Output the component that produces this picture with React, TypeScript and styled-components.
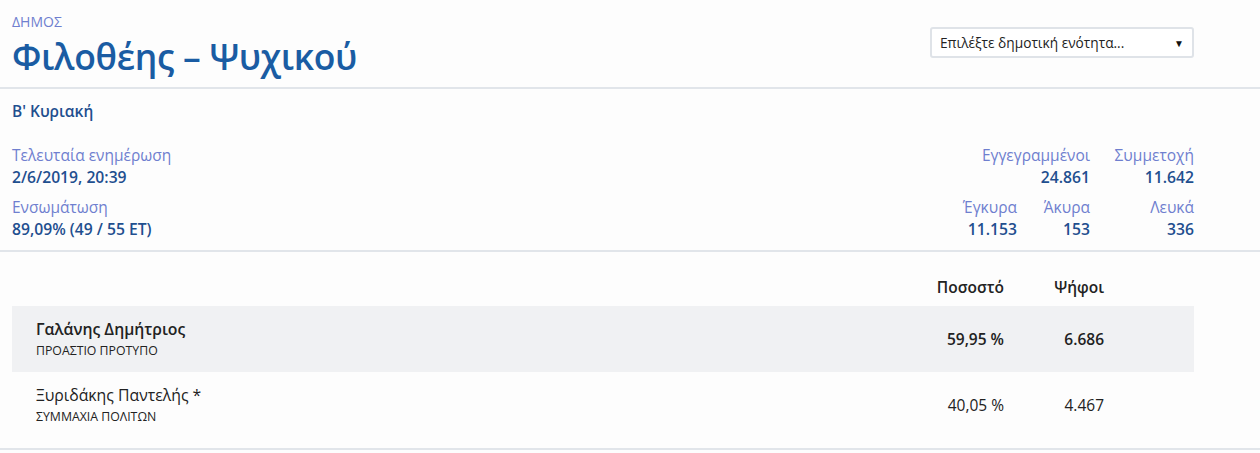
import * as React from 'react';
import styled, { createGlobalStyle } from 'styled-components';

const GlobalStyle = createGlobalStyle`
    body {
        margin: 0;
        background: #fdfdfd;
        font-family: "Open Sans", "Noto Sans", Arial, sans-serif;
    }
`;

const LABEL = '#6f7fcf';
const VALUE = '#1f4f8f';
const LINE = '#e1e5ea';

type Candidate = {
    name: string,
    party: string,
    percent: string,
    votes: string,
    winner?: boolean
}

const candidates: Candidate[] = [
    { name: 'Γαλάνης Δημήτριος', party: 'ΠΡΟΑΣΤΙΟ ΠΡΟΤΥΠΟ', percent: '59,95 %', votes: '6.686', winner: true },
    { name: 'Ξυριδάκης Παντελής *', party: 'ΣΥΜΜΑΧΙΑ ΠΟΛΙΤΩΝ', percent: '40,05 %', votes: '4.467' },
];

const Page = styled.div`
    width: 1260px;
`;

const Section = styled.div`
    padding: 0 66px 0 12px;
    border-bottom: 2px solid ${LINE};
`;

const Header = styled(Section)`
    display: flex;
    justify-content: space-between;
    align-items: flex-start;
    height: 89px;
    box-sizing: border-box;
`;

const Kind = styled.div`
    margin-top: 13px;
    font-size: 14px;
    line-height: 18px;
    color: ${LABEL};
`;

const Title = styled.h1`
    margin: 0;
    font-size: 35.5px;
    font-weight: 600;
    line-height: 50px;
    color: #1a5ca3;
    letter-spacing: -0.3px;
`;

const Select = styled.div`
    margin-top: 27px;
    width: 264px;
    height: 31px;
    box-sizing: border-box;
    border: 2px solid #dfe3e8;
    border-radius: 3px;
    background: #fff;
    display: flex;
    align-items: center;
    justify-content: space-between;
    padding: 0 8px 0 8px;
    font-size: 13.7px;
    color: #222;
`;

const Arrow = styled.span`
    font-size: 10px;
    color: #111;
`;

const Info = styled(Section)`
    padding-top: 12px;
    padding-bottom: 10px;
`;

const Round = styled.div`
    font-size: 15.5px;
    font-weight: 600;
    line-height: 20px;
    color: ${VALUE};
    margin-bottom: 23px;
`;

const Stats = styled.div`
    display: flex;
    justify-content: space-between;
`;

const StatList = styled.div`
    display: flex;
    flex-direction: column;
    gap: 8px;
`;

const Grid = styled.div`
    display: grid;
    grid-template-columns: 80px 73px 104px;
    row-gap: 8px;
    text-align: right;
`;

const Stat = styled.div<{ $span?: number }>`
    grid-column: ${({ $span }) => $span ? `span ${$span}` : 'auto'};
`;

const Label = styled.div`
    font-size: 15.5px;
    line-height: 22px;
    color: ${LABEL};
`;

const Value = styled.div`
    font-size: 15.7px;
    line-height: 22px;
    font-weight: 600;
    color: ${VALUE};
`;

const Results = styled(Section)`
    padding-top: 20px;
    padding-bottom: 10px;
`;

const Row = styled.div<{ $shade?: boolean, $head?: boolean }>`
    display: grid;
    grid-template-columns: 1fr 120px 100px 90px;
    align-items: center;
    height: ${({ $head }) => $head ? '30px' : '66px'};
    margin-bottom: ${({ $head }) => $head ? '4px' : '0'};
    background: ${({ $shade }) => $shade ? '#f0f1f3' : 'transparent'};
    color: #222;
`;

const Cell = styled.div<{ $bold?: boolean }>`
    text-align: right;
    font-size: 15.5px;
    font-weight: ${({ $bold }) => $bold ? 600 : 400};
`;

const Name = styled.div<{ $bold?: boolean }>`
    padding-left: 24px;
    font-size: 15.8px;
    line-height: 24px;
    font-weight: ${({ $bold }) => $bold ? 600 : 400};
`;

const Party = styled.div`
    padding-left: 24px;
    font-size: 12.3px;
    line-height: 20px;
    color: #222;
`;

const App: React.FC = () => {
    return (
        <Page>
            <GlobalStyle />
            <Header>
                <div>
                    <Kind>ΔΗΜΟΣ</Kind>
                    <Title>Φιλοθέης – Ψυχικού</Title>
                </div>
                <Select>
                    <span>Επιλέξτε δημοτική ενότητα...</span>
                    <Arrow>▼</Arrow>
                </Select>
            </Header>
            <Info>
                <Round>Β' Κυριακή</Round>
                <Stats>
                    <StatList>
                        <div>
                            <Label>Τελευταία ενημέρωση</Label>
                            <Value>2/6/2019, 20:39</Value>
                        </div>
                        <div>
                            <Label>Ενσωμάτωση</Label>
                            <Value>89,09% (49 / 55 ΕΤ)</Value>
                        </div>
                    </StatList>
                    <Grid>
                        <Stat $span={2}>
                            <Label>Εγγεγραμμένοι</Label>
                            <Value>24.861</Value>
                        </Stat>
                        <Stat>
                            <Label>Συμμετοχή</Label>
                            <Value>11.642</Value>
                        </Stat>
                        <Stat>
                            <Label>Έγκυρα</Label>
                            <Value>11.153</Value>
                        </Stat>
                        <Stat>
                            <Label>Άκυρα</Label>
                            <Value>153</Value>
                        </Stat>
                        <Stat>
                            <Label>Λευκά</Label>
                            <Value>336</Value>
                        </Stat>
                    </Grid>
                </Stats>
            </Info>
            <Results>
                <Row $head>
                    <div />
                    <Cell $bold>Ποσοστό</Cell>
                    <Cell $bold>Ψήφοι</Cell>
                    <div />
                </Row>
                {candidates.map((c, i) => (
                    <Row key={c.name} $shade={i % 2 === 0}>
                        <div>
                            <Name $bold={c.winner}>{c.name}</Name>
                            <Party>{c.party}</Party>
                        </div>
                        <Cell $bold={c.winner}>{c.percent}</Cell>
                        <Cell $bold={c.winner}>{c.votes}</Cell>
                        <div />
                    </Row>
                ))}
            </Results>
        </Page>
    );
}

export default App;
